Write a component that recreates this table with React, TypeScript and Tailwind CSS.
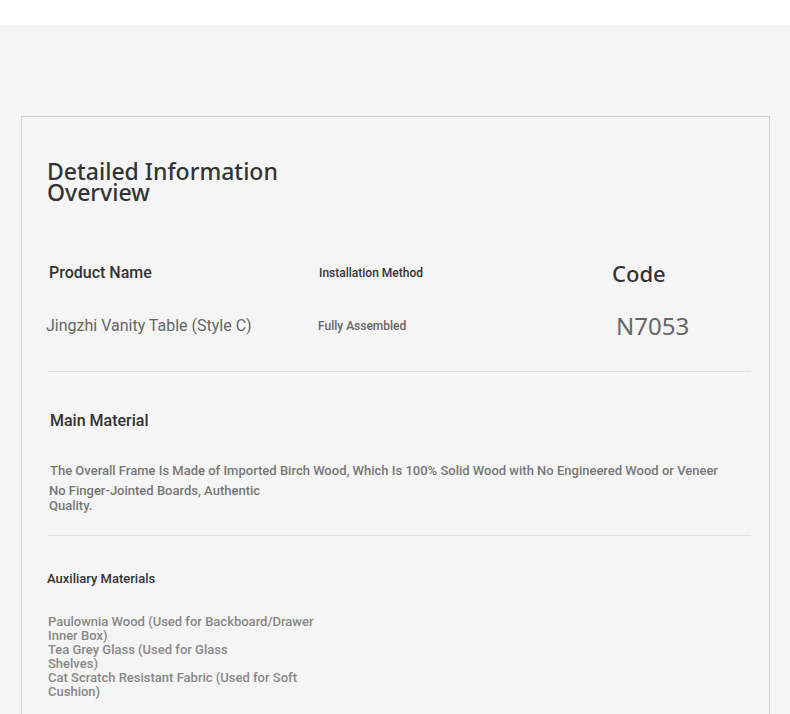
const roboto = "font-['Roboto','Liberation_Sans',sans-serif]";
const noto = "font-['Noto_Sans','Open_Sans',sans-serif]";

const auxiliary = [
  { text: "Paulownia Wood (Used for Backboard/Drawer Inner Box)", w: "w-[275px]" },
  { text: "Tea Grey Glass (Used for Glass Shelves)", w: "w-[200px]" },
  { text: "Cat Scratch Resistant Fabric (Used for Soft Cushion)", w: "w-[260px]" },
];

export default function App() {
  return (
    <div className={`min-h-screen bg-[#f5f5f5] ${roboto}`}>
      <div className="h-[25px] bg-white" />

      <div className="pt-[91px] pl-[21px]">
        <div className="w-[749px] border border-[#cfcfcf] pl-[25px] pr-[18px] pt-[44px] pb-16">
          <h1 className={`${noto} text-[23px] font-medium leading-[21px] text-[#333] w-[250px]`}>
            Detailed Information Overview
          </h1>

          <div className="mt-[58px] grid grid-cols-[271px_294px_1fr]">
            <div className="pl-[2px] text-[16px] font-medium leading-[24px] text-[#333]">
              Product Name
            </div>
            <div className="pl-[1px] text-[12px] font-medium leading-[24px] text-[#333]">
              Installation Method
            </div>
            <div className={`${noto} text-[22px] font-medium leading-[24px] text-[#333]`}>
              Code
            </div>

            <div className="-ml-[1px] mt-[29px] text-[16px] leading-[24px] text-[#666]">
              Jingzhi Vanity Table (Style C)
            </div>
            <div className="mt-[29px] text-[12px] font-medium leading-[24px] text-[#666]">
              Fully Assembled
            </div>
            <div className={`${noto} mt-[29px] pl-[4px] text-[24px] leading-[24px] text-[#666]`}>
              N7053
            </div>
          </div>

          <div className="mt-[33px] h-px bg-[#e0e0e0]" />

          <h2 className="mt-[37px] pl-[3px] text-[16px] font-medium leading-[24px] text-[#333]">
            Main Material
          </h2>
          <p className="mt-[30px] pl-[3px] text-[13px] font-medium leading-[16px] text-[#777]">
            The Overall Frame Is Made of Imported Birch Wood, Which Is 100% Solid Wood with No Engineered Wood or Veneer
          </p>
          <p className="mt-[4px] w-[230px] pl-[2px] text-[13px] font-medium leading-[15px] text-[#777]">
            No Finger-Jointed Boards, Authentic Quality.
          </p>

          <div className="mt-[22px] ml-[1px] h-px bg-[#e0e0e0]" />

          <h3 className="mt-[35px] text-[13px] font-medium leading-[16px] text-[#333]">
            Auxiliary Materials
          </h3>
          <ul className="mt-[28px] pl-[1px] text-[13px] font-medium leading-[14px] text-[#888]">
            {auxiliary.map((item) => (
              <li key={item.text} className={`${item.w} mb-[0px]`}>
                {item.text}
              </li>
            ))}
          </ul>
        </div>
      </div>
    </div>
  );
}
